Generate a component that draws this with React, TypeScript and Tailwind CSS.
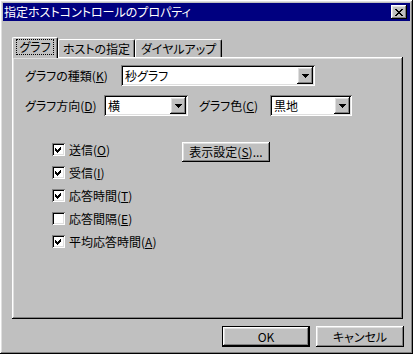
import React from 'react';

const raised =
  'shadow-[inset_-1px_-1px_#000,inset_1px_1px_#fff,inset_-2px_-2px_#808080,inset_2px_2px_#dfdfdf]';
const sunken =
  'shadow-[inset_1px_1px_#808080,inset_-1px_-1px_#fff,inset_2px_2px_#000,inset_-2px_-2px_#dfdfdf]';

// underlined accelerator key, e.g. (K)
const Acc = ({ k }: { k: string }) => (
  <span>
    (<u className="underline-offset-[1px]">{k}</u>)
  </span>
);

const DownArrow = () => (
  <svg width="7" height="4" viewBox="0 0 7 4" shapeRendering="crispEdges">
    <polygon points="0,0 7,0 3.5,4" fill="#000" />
  </svg>
);

const Combo = ({ value, width }: { value: string; width: string }) => (
  <div className={`${width} h-[21px] bg-white ${sunken} flex items-center p-[2px]`}>
    <span className="flex-1 pl-[2px] leading-none">{value}</span>
    <div className={`w-[16px] h-[17px] bg-[#c0c0c0] ${raised} flex items-center justify-center`}>
      <DownArrow />
    </div>
  </div>
);

const Check = ({ checked }: { checked: boolean }) => (
  <div className={`w-[13px] h-[13px] bg-white ${sunken} flex items-center justify-center`}>
    {checked && (
      <svg width="7" height="7" viewBox="0 0 7 7" shapeRendering="crispEdges">
        <polygon points="0,2 2,4 6,0 6,3 2,7 0,5" fill="#000" />
      </svg>
    )}
  </div>
);

const Button = ({ children, isDefault }: { children: React.ReactNode; isDefault?: boolean }) => (
  <div
    className={`w-[88px] h-[21px] bg-[#c0c0c0] flex items-center justify-center ${
      isDefault
        ? 'border border-black shadow-[inset_-1px_-1px_#000,inset_1px_1px_#fff,inset_-2px_-2px_#808080,inset_2px_2px_#dfdfdf]'
        : raised
    }`}
  >
    {children}
  </div>
);

const checks: [string, string, boolean][] = [
  ['送信', 'O', true],
  ['受信', 'I', true],
  ['応答時間', 'T', true],
  ['応答間隔', 'E', false],
  ['平均応答時間', 'A', true],
];

export default function App() {
  return (
    <div
      className={`w-[413px] h-[354px] bg-[#c0c0c0] p-[3px] flex flex-col text-[12px] text-black leading-none font-['Noto_Sans_CJK_JP',sans-serif] [font-feature-settings:'palt'] ${raised}`}
    >
      {/* title bar */}
      <div className="h-[18px] bg-[#000080] flex items-center justify-between pl-[1px] pr-[3px]">
        <span className="text-white">指定ホストコントロールのプロパティ</span>
        <div className={`w-[16px] h-[14px] bg-[#c0c0c0] ${raised} flex items-center justify-center`}>
          <svg width="8" height="7" viewBox="0 0 8 7" shapeRendering="crispEdges">
            <path d="M0 0h2v1h1v1h2V1h1V0h2v1H7v1H6v1H5v1h1v1h1v1h1v1H6V6H5V5H3v1H2v1H0V6h1V5h1V4h1V3H2V2H1V1H0z" fill="#000" />
          </svg>
        </div>
      </div>

      {/* tabs */}
      <div className="mt-[16px] ml-[9px] flex items-end relative z-10">
        <div className="w-[46px] h-[21px] -mb-[1px] bg-[#c0c0c0] border-t border-l border-white border-r border-r-black shadow-[inset_-1px_0_#808080] rounded-t-[2px] flex items-center justify-center pb-[2px]">
          <span className="border border-dotted border-black px-[2px] py-[1px]">グラフ</span>
        </div>
        <div className="w-[77px] h-[18px] bg-[#c0c0c0] border-t border-l border-white border-r border-r-black shadow-[inset_-1px_0_#808080] rounded-t-[2px] flex items-center justify-center">
          ホストの指定
        </div>
        <div className="w-[87px] h-[18px] bg-[#c0c0c0] border-t border-l border-white border-r border-r-black shadow-[inset_-1px_0_#808080] rounded-t-[2px] flex items-center justify-center">
          ダイヤルアップ
        </div>
      </div>

      {/* tab panel */}
      <div className={`ml-[9px] w-[391px] h-[262px] ${raised} pt-[8px] pl-[13px] flex flex-col`}>
        <div className="flex items-center">
          <span className="w-[96px]">
            グラフの種類<Acc k="K" />
          </span>
          <Combo value="秒グラフ" width="w-[194px]" />
        </div>
        <div className="flex items-center mt-[9px]">
          <span className="w-[79px]">
            グラフ方向<Acc k="D" />
          </span>
          <Combo value="横" width="w-[84px]" />
          <span className="w-[71px] ml-[11px]">
            グラフ色<Acc k="C" />
          </span>
          <Combo value="黒地" width="w-[82px]" />
        </div>

        <div className="flex items-start mt-[27px]">
          <div className="w-[157px] pl-[27px] flex flex-col gap-[10px]">
            {checks.map(([label, key, on]) => (
              <div key={label} className="flex items-center h-[13px]">
                <Check checked={on} />
                <span className="ml-[4px]">
                  {label}
                  <Acc k={key} />
                </span>
              </div>
            ))}
          </div>
          <div className="-mt-[1px]">
            <div className={`w-[88px] h-[20px] bg-[#c0c0c0] ${raised} flex items-center justify-center`}>
              表示設定<Acc k="S" />...
            </div>
          </div>
        </div>
      </div>

      {/* dialog buttons */}
      <div className="mt-[7px] flex justify-end gap-[6px] pr-[6px]">
        <Button isDefault>OK</Button>
        <Button>キャンセル</Button>
      </div>
    </div>
  );
}
